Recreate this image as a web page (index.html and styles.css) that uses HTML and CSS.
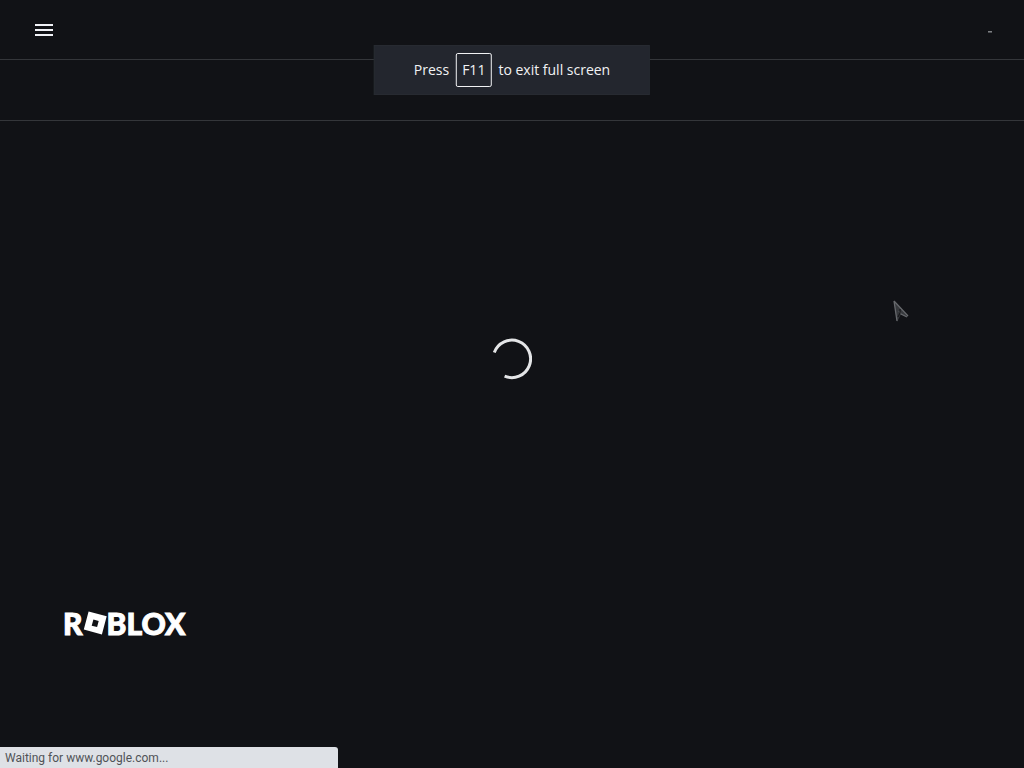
FILE: index.html
```html
<!DOCTYPE html>
<html lang="en">
<head>
<meta charset="utf-8">
<meta name="viewport" content="width=device-width, initial-scale=1">
<title>Roblox</title>
<link rel="stylesheet" href="styles.css">
</head>
<body>
<header class="topbar">
  <button class="menu" type="button" aria-label="Menu">
    <svg width="18" height="12" viewBox="0 0 18 12" aria-hidden="true"><path d="M0 0h18v2H0zM0 5h18v2H0zM0 10h18v2H0z" fill="currentColor"/></svg>
  </button>
  <svg class="dash" width="4" height="6" viewBox="0 0 4 6" aria-hidden="true"><path d="M0 4.8h4" stroke="currentColor" stroke-width="1.4"/></svg>
</header>
<nav class="subbar" aria-label="Section"></nav>
<main class="content">
  <svg class="spinner" role="img" aria-label="Loading" width="40" height="42" viewBox="0 0 40 42"><path d="M2.3 14.5A18.7 18.7 0 1 1 12.6 38.1" fill="none" stroke="currentColor" stroke-width="3"/></svg>
</main>
<footer class="footer">
  <a class="logo" href="#"><span>R</span><svg width="24" height="24" viewBox="0 0 24 24" aria-hidden="true"><path fill="currentColor" fill-rule="evenodd" d="M5.6.5 23.7 5.3 18.9 23.5.8 18.6zM10.4 8.6 8.7 14.7 14.1 16.1 15.7 10z"/></svg><span>BLOX</span></a>
</footer>
<div class="toast" role="status"><span>Press</span><kbd class="key">F11</kbd><span>to exit full screen</span></div>
<svg class="pointer" width="18" height="24" viewBox="0 0 18 24" aria-hidden="true"><path d="M2 1 16 17 9 14 5 22z" fill="#37393d"/><path d="M2 1 5 21M2 1 16 16M7 11 9 14 15 17" fill="none" stroke="#67696d" stroke-width="1.3"/><path d="M8 9v4l-2 4" fill="none" stroke="#191a1d" stroke-width="1.3"/></svg>
<div class="status" role="status">Waiting for www.google.com...</div>
</body>
</html>
```
FILE: styles.css
```css
* {
  box-sizing: border-box;
}

body {
  margin: 0;
  min-height: 100vh;
  display: flex;
  flex-direction: column;
  background: #111216;
  color: #f1f2f4;
  font-family: "Open Sans", "Noto Sans", sans-serif;
}

.topbar {
  display: flex;
  align-items: center;
  justify-content: space-between;
  height: 60px;
  padding: 0 32px 0 27px;
  border-bottom: 1px solid #34363a;
}

.menu {
  display: flex;
  padding: 8px;
  border: 0;
  background: none;
  color: #f1f2f7;
}

.dash {
  color: #8b8d90;
}

.subbar {
  height: 61px;
  border-bottom: 1px solid #34363a;
}

.content {
  flex: 1;
  display: flex;
  align-items: center;
  justify-content: center;
}

.spinner {
  color: #e4e5e7;
}

.footer {
  padding: 15px 63px 133px;
}

.logo {
  display: flex;
  width: fit-content;
  align-items: center;
  color: #fff;
  font: 900 30px/24px Lato, sans-serif;
  -webkit-text-stroke: 1px #fff;
  text-decoration: none;
}

.toast {
  position: fixed;
  top: 45px;
  left: 50%;
  transform: translateX(-50%);
  display: flex;
  align-items: center;
  gap: 7px;
  padding: 7px 39px;
  border: 1px solid #272a31;
  background: #23262e;
  font-size: 14px;
  line-height: 20px;
  white-space: nowrap;
}

.key {
  padding: 6px 5px;
  border: 1px solid #f1f2f4;
  border-radius: 2px;
  font: inherit;
}

.pointer {
  position: absolute;
  top: 300px;
  left: 892px;
}

.status {
  position: fixed;
  bottom: 0;
  left: 0;
  width: 33%;
  min-width: 200px;
  padding: 3px 5px 2px;
  border-top-right-radius: 3px;
  background: #dee1e6;
  color: #505357;
  font-family: Roboto, sans-serif;
  font-size: 12px;
  line-height: 16px;
}
```
